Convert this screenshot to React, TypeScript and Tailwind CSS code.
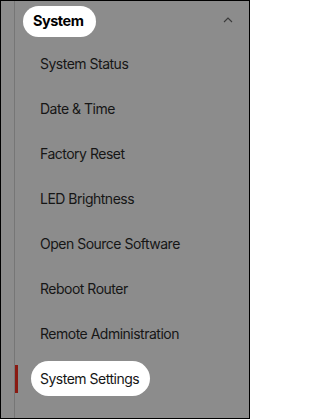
const items = [
  "System Status",
  "Date & Time",
  "Factory Reset",
  "LED Brightness",
  "Open Source Software",
  "Reboot Router",
  "Remote Administration",
  "System Settings",
];

const active = "System Settings";

const App = () => {
  return (
    <div
      className="w-[250px] h-[419px] border border-black bg-[#8c8c8c] flex text-[#161616]"
      style={{ fontFamily: "Inter, \"Liberation Sans\", sans-serif" }}
    >
      <div className="w-[13px] shrink-0" />
      <div className="flex-1 flex flex-col border-l border-[#767676]">
        <div className="h-[40px] flex items-center justify-between pl-[8px] pr-[16px]">
          <span className="h-[31px] pl-[10px] pr-[13px] flex items-center rounded-full bg-white text-[14.5px] font-bold tracking-[-0.5px] text-black">
            System
          </span>
          <svg width="10" height="6" viewBox="0 0 10 6" className="mb-[2px]">
            <path d="M1 5 L5 1 L9 5" fill="none" stroke="#3a3a3a" strokeWidth="1.1" />
          </svg>
        </div>
        {items.map((item) => (
          <div key={item} className="h-[45px] flex items-center">
            <div
              className={
                item === active
                  ? "w-[3px] h-[28px] bg-[#8a1a12] shrink-0"
                  : "w-[3px] h-[28px] shrink-0"
              }
            />
            <span
              className={
                item === active
                  ? "ml-[13px] h-[35px] px-[9px] pr-[11px] flex items-center rounded-full bg-white text-[14px] tracking-[-0.5px]"
                  : "ml-[13px] h-[35px] px-[9px] flex items-center text-[14px] tracking-[-0.5px]"
              }
            >
              {item}
            </span>
          </div>
        ))}
      </div>
    </div>
  );
};

export default App;
